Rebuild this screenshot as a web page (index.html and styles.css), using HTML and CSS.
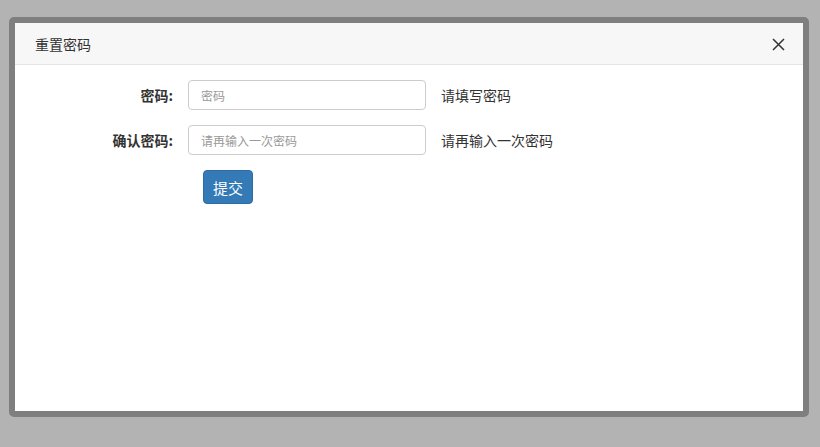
FILE: index.html
```html
<!DOCTYPE html>
<html lang="zh-CN">
<head>
    <meta charset="UTF-8">
    <meta name="viewport" content="width=device-width, initial-scale=1.0">
    <title>重置密码</title>
    <link rel="stylesheet" href="styles.css">
</head>
<body>
    <div class="modal">
        <div class="modal-header">
            <span class="modal-title">重置密码</span>
            <span class="close">
                <svg width="13" height="13" viewBox="0 0 13 13">
                    <path d="M1 1 L12 12 M12 1 L1 12" stroke="#333" stroke-width="1.5" fill="none"/>
                </svg>
            </span>
        </div>
        <div class="modal-body">
            <div class="form-row">
                <label class="form-label">密码:</label>
                <input type="password" class="form-input" placeholder="密码">
                <span class="help">请填写密码</span>
            </div>
            <div class="form-row">
                <label class="form-label">确认密码:</label>
                <input type="password" class="form-input" placeholder="请再输入一次密码">
                <span class="help">请再输入一次密码</span>
            </div>
            <div class="form-row">
                <button class="btn-submit">提交</button>
            </div>
        </div>
    </div>
</body>
</html>
```

FILE: styles.css
```css
body {
    font-family: "Noto Sans CJK SC", "Liberation Sans", sans-serif;
    background-color: #b3b3b3;
    color: #333;
    margin: 0;
    padding: 17px 0 0 9px;
}
.modal {
    box-sizing: border-box;
    width: 800px;
    height: 400px;
    background-color: #fff;
    border: 6px solid #7f7f7f;
    border-radius: 5px;
}
.modal-header {
    display: flex;
    justify-content: space-between;
    align-items: center;
    height: 41px;
    padding: 0 18px 0 20px;
    background-color: #f7f7f7;
    border-bottom: 1px solid #e5e5e5;
}
.modal-title {
    font-size: 14px;
    color: #333;
}
.close {
    display: flex;
    width: 13px;
    height: 13px;
    margin-top: 2px;
}
.modal-body {
    padding-top: 15px;
}
.form-row {
    display: flex;
    align-items: center;
    margin-bottom: 15px;
}
.form-label {
    box-sizing: border-box;
    width: 173px;
    padding-right: 15px;
    text-align: right;
    font-size: 14px;
    font-weight: bold;
}
.form-input {
    box-sizing: border-box;
    width: 238px;
    height: 30px;
    padding: 5px 12px;
    border: 1px solid #ccc;
    border-radius: 4px;
    font-size: 12px;
    font-family: "Noto Sans CJK SC", "Liberation Sans", sans-serif;
    color: #555;
}
.form-input::placeholder {
    color: #999;
}
.help {
    margin-left: 15px;
    font-size: 14px;
    color: #333;
}
.btn-submit {
    box-sizing: border-box;
    margin-left: 188px;
    width: 50px;
    height: 34px;
    background-color: #337ab7;
    border: 1px solid #2e6da4;
    border-radius: 4px;
    color: #fff;
    font-size: 15px;
    font-family: "Noto Sans CJK SC", "Liberation Sans", sans-serif;
    padding: 0;
}
```
